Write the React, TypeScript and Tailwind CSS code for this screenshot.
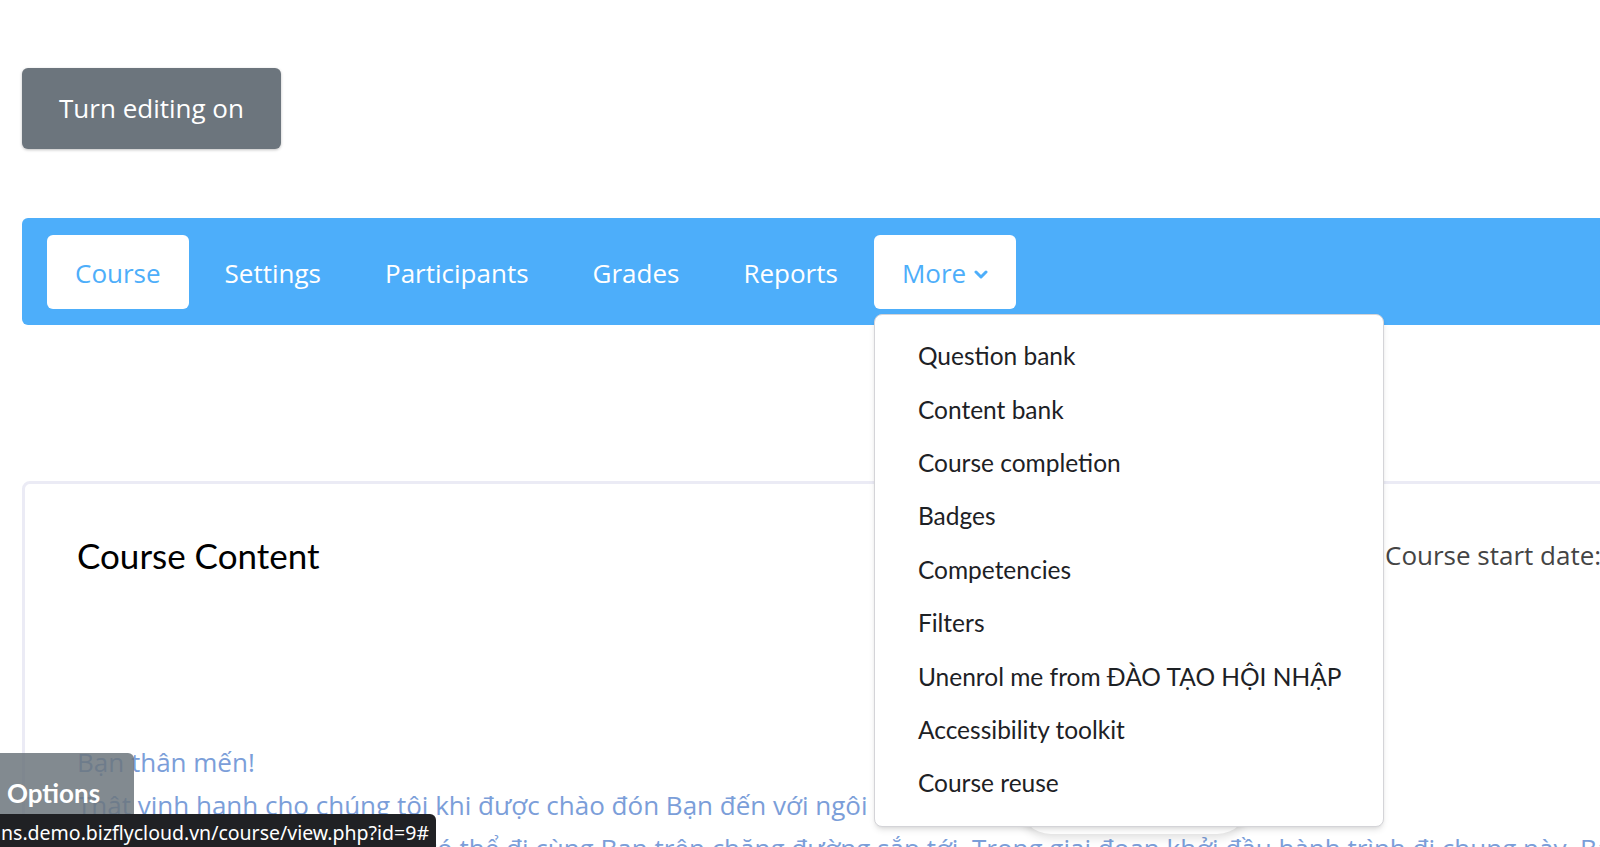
import React from 'react';

const tabs = ['Course', 'Settings', 'Participants', 'Grades', 'Reports'];

const moreItems = [
  'Question bank',
  'Content bank',
  'Course completion',
  'Badges',
  'Competencies',
  'Filters',
  'Unenrol me from ĐÀO TẠO HỘI NHẬP',
  'Accessibility toolkit',
  'Course reuse',
];

const Chevron = () => (
  <svg width="14" height="9" viewBox="0 0 14 9" fill="none" className="ml-2 mt-[2px]">
    <path d="M2 2 L7 7 L12 2" stroke="#4daefa" strokeWidth="3" strokeLinecap="round" strokeLinejoin="round" />
  </svg>
);

const MoreMenu = () => (
  <div className="relative">
    <button className="flex h-[74px] items-center rounded-md bg-white px-[28px] pt-[3px] text-[26px] text-[#4daefa]">
      More
      <Chevron />
    </button>
    <div className="absolute left-0 top-full z-30 mt-[5px] w-[510px] rounded-lg border border-[#d4d4d8] bg-white py-[15px] shadow-md">
      {moreItems.map((item) => (
        <div key={item} className="flex h-[53.4px] items-center whitespace-nowrap pl-[43px] font-['Lato',sans-serif] text-[24.5px] text-[#1d2125]">
          {item}
        </div>
      ))}
    </div>
  </div>
);

const App = () => {
  return (
    <div className="relative h-[847px] w-full overflow-hidden bg-white pl-[22px] font-['Open_Sans',sans-serif]">
      <button className="mt-[68px] h-[81px] w-[259px] rounded-md bg-[#6c757d] text-[26px] text-white shadow-[0_1px_3px_rgba(0,0,0,0.25)]">
        Turn editing on
      </button>

      <nav className="mt-[69px] flex h-[107px] items-start gap-2 rounded-l-md bg-[#4daefa] pl-[25px] pt-[17px]">
        {tabs.map((tab) => (
          <a
            key={tab}
            href="#"
            className={
              tab === 'Course'
                ? 'flex h-[74px] items-center rounded-md bg-white px-[28px] pt-[3px] text-[26px] text-[#4daefa]'
                : 'flex h-[74px] items-center rounded-md px-[28px] pt-[3px] text-[26px] text-white'
            }
          >
            {tab}
          </a>
        ))}
        <MoreMenu />
      </nav>

      <section className="-mr-[40px] mt-[156px] h-[500px] rounded-lg border-[3px] border-[#ebebf5] pl-[52px] pt-[51px]">
        <div className="flex items-center">
          <h2 className="w-[1308px] shrink-0 font-['Lato',sans-serif] text-[35px] leading-[41px] text-black">Course Content</h2>
          <span className="whitespace-nowrap text-[26px] text-[#444]">Course start date: 1 May 2024</span>
        </div>

        <div className="mt-[165px] whitespace-nowrap text-[26px] leading-[43px] text-[#7b9ed9]">
          <p>Bạn thân mến!</p>
          <p>Thật vinh hạnh cho chúng tôi khi được chào đón Bạn đến với ngôi nhà chung Bizfly.</p>
          <p>Chúng tôi thực sự rất vui khi có thể đi cùng Bạn trên chặng đường sắp tới. Trong giai đoạn khởi đầu hành trình đi chung này, Bạn sẽ được</p>
        </div>
      </section>

      {/* floating pill peeking out under the menu */}
      <div className="absolute left-[1019px] top-[770px] z-10 h-[64px] w-[230px] rounded-[32px] bg-white shadow-[0_4px_10px_rgba(0,0,0,0.12)]" />

      {/* drawer toggle at the bottom-left corner */}
      <div className="absolute left-0 top-[753px] z-20 h-[80px] w-[134px] rounded-tr-md bg-[#6c757d]/85 pl-[7px] pt-[24px] font-['Lato',sans-serif] text-[26px] font-bold leading-[32px] text-white">
        Options
      </div>

      {/* status bar link preview */}
      <div className="absolute left-0 top-[814px] z-40 flex h-[40px] w-[436px] items-center overflow-hidden rounded-tr-md bg-[#202124] pb-[2px] pl-[1px] font-['Noto_Sans',sans-serif] text-[19.5px] text-white">
        <span className="whitespace-nowrap">ns.demo.bizflycloud.vn/course/view.php?id=9#</span>
      </div>
    </div>
  );
};

export default App;
